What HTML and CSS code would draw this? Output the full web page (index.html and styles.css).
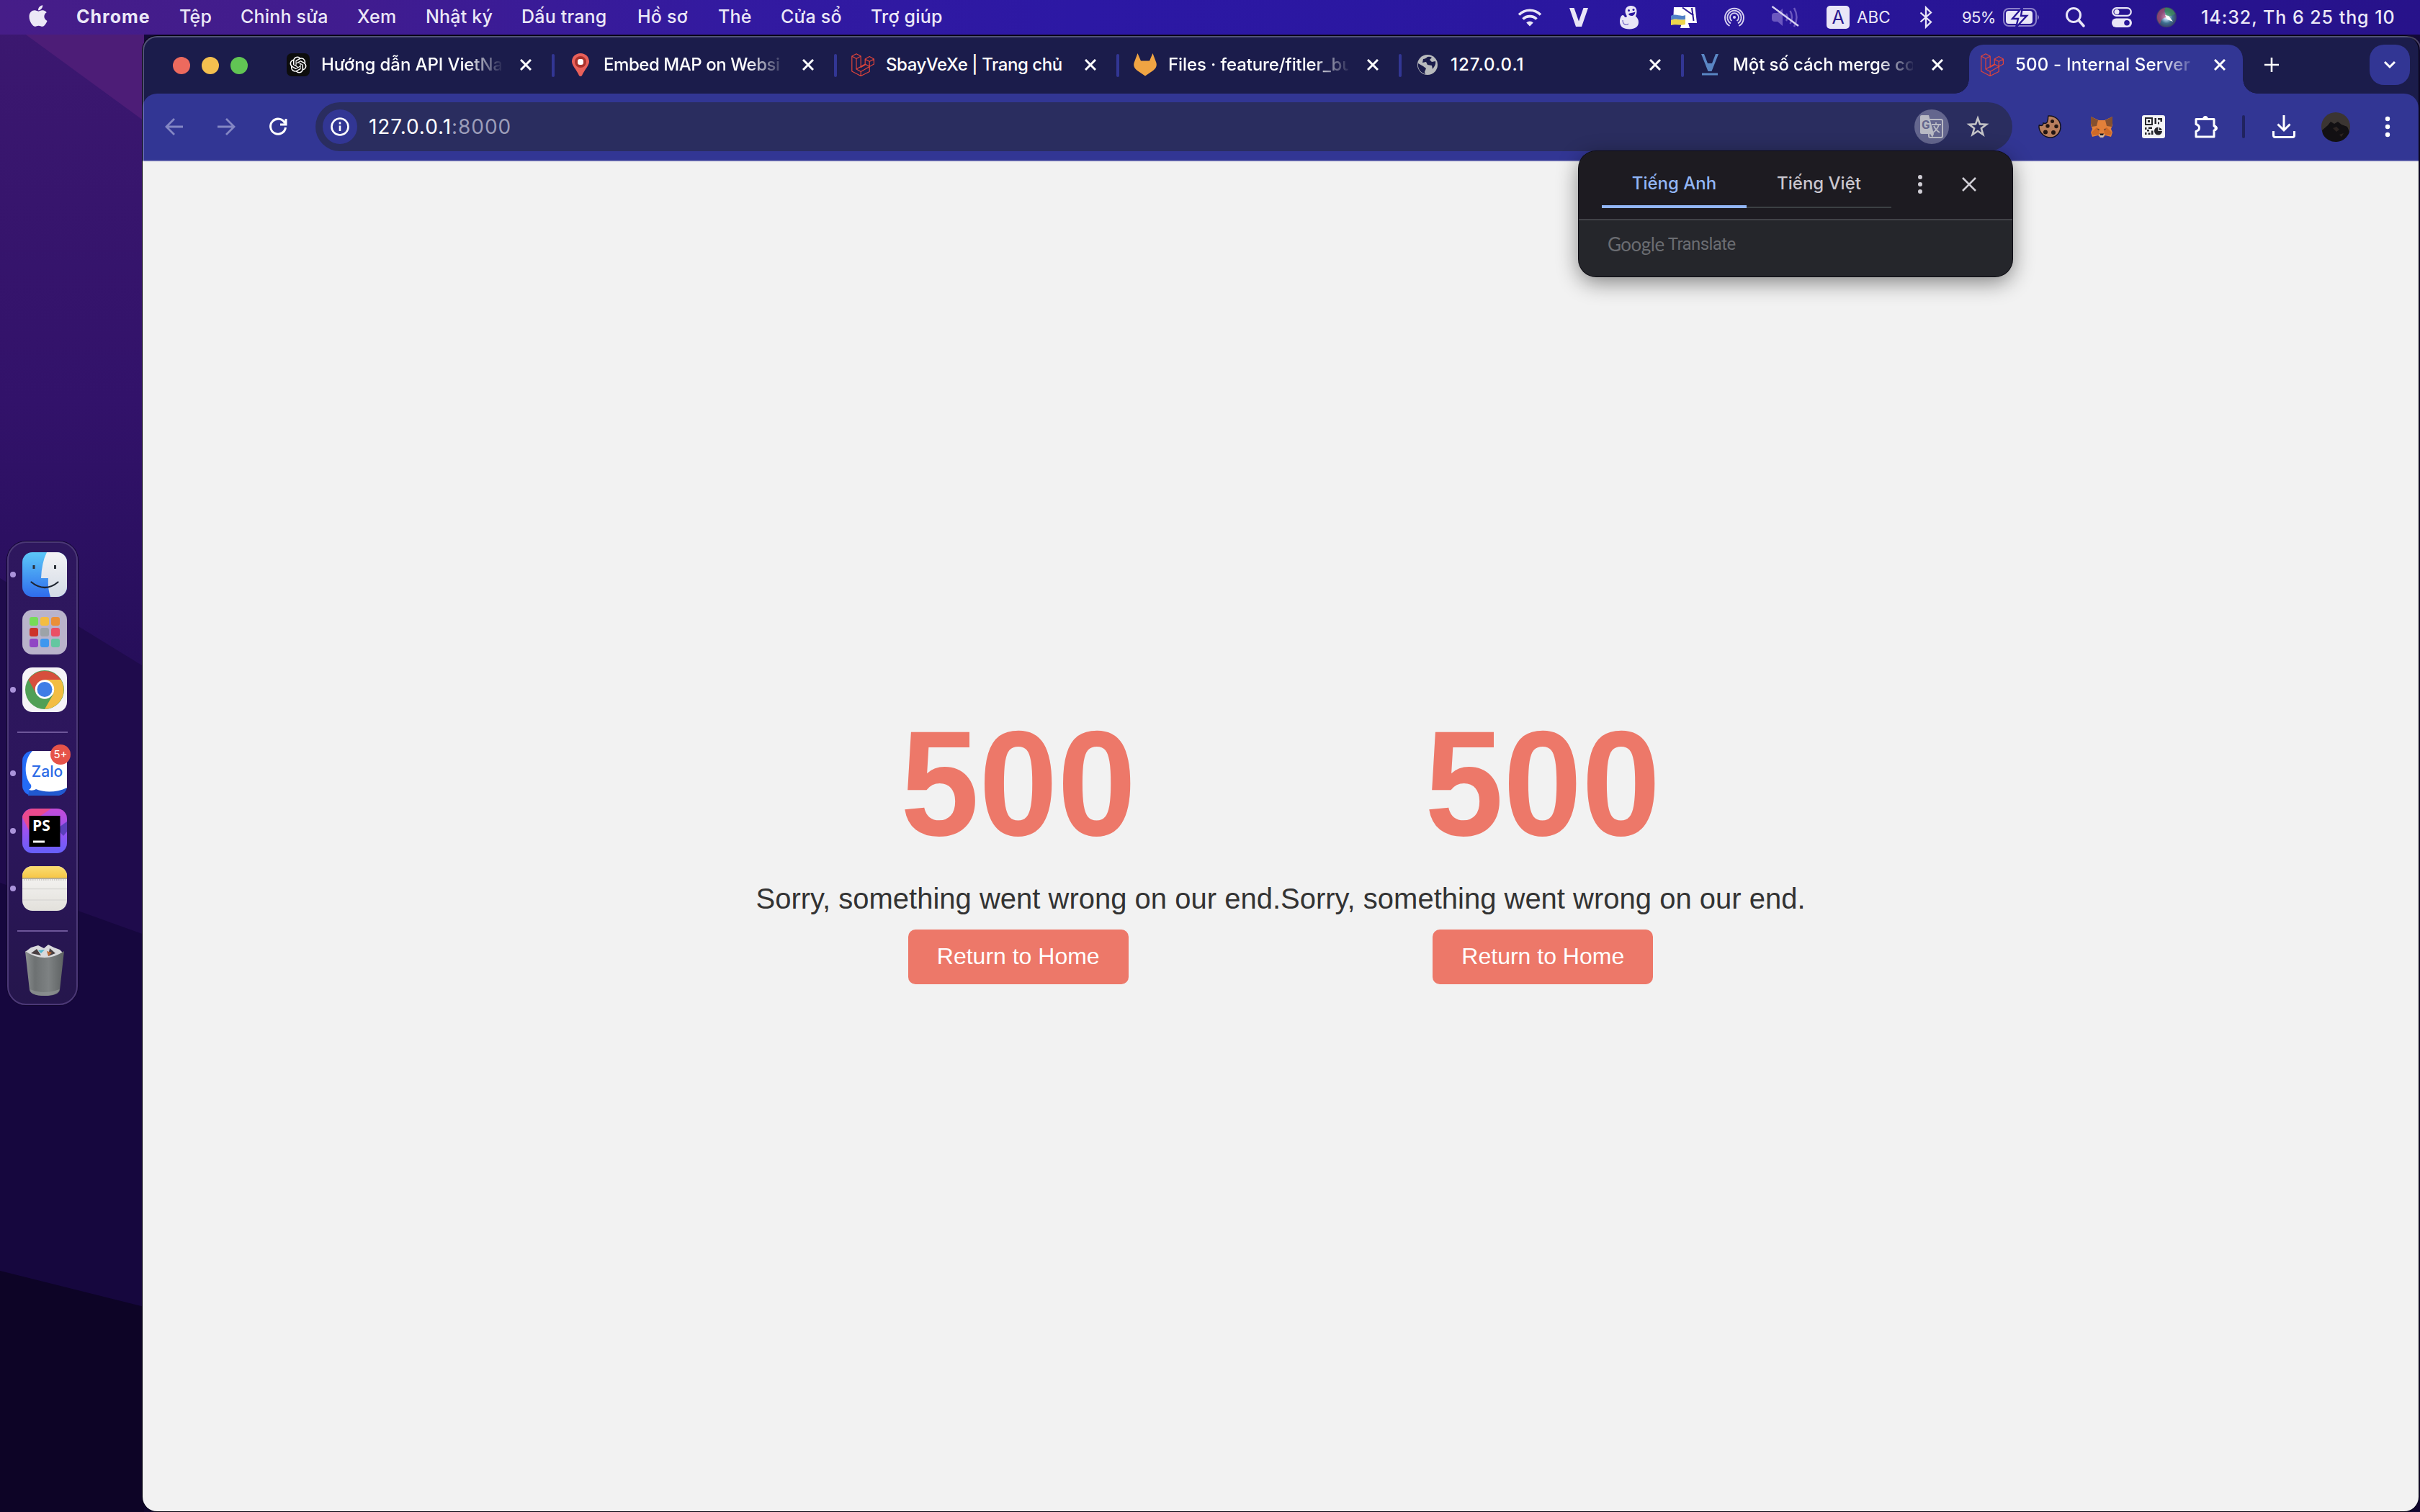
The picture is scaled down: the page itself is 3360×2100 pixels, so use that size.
FILE: index.html
```html
<!DOCTYPE html>
<html lang="vi">
<head>
<meta charset="utf-8">
<title>500 - Internal Server Error</title>
<link rel="stylesheet" href="styles.css">
</head>
<body>
<svg width="0" height="0" class="defs">
  <defs>
    <symbol id="close" viewBox="0 0 16 16"><path d="M1 1l14 14M15 1L1 15" fill="none" stroke="currentColor" stroke-width="3"/></symbol>
    <symbol id="laravel" viewBox="0 0 32 32"><path fill="none" stroke="#e0443a" stroke-width="1.2" stroke-linejoin="round" d="M.8 4L7 .8 13.200 4v15.500l6-3.500V8L25.200 4.500 31.400 8v7l-6.200 3.500v7L13.200 31.500.8 25zM.8 4L7 7.500 13.200 4M7 7.500v14.500l6.200 3.500v6M19.200 8l6 3.500 6.200-3.500M25.200 11.500v7L19.200 15M7 22l6.200-3.500M13.200 25.500l12-7M7 22l12.200-7"/></symbol>
    <linearGradient id="fBlue" x1="0" y1="0" x2="0" y2="1"><stop offset="0" stop-color="#5cc8f8"/><stop offset="1" stop-color="#2f6cec"/></linearGradient>
    <linearGradient id="fWhite" x1="0" y1="0" x2="0" y2="1"><stop offset="0" stop-color="#f4f3f5"/><stop offset="1" stop-color="#d3dbe6"/></linearGradient>
    <linearGradient id="psBg" x1="0" y1="0" x2="0" y2="1"><stop offset="0" stop-color="#c44bd8"/><stop offset=".5" stop-color="#9a52f0"/><stop offset="1" stop-color="#6560fa"/></linearGradient>
    <linearGradient id="noteTop" x1="0" y1="0" x2="0" y2="1"><stop offset="0" stop-color="#fbdd74"/><stop offset="1" stop-color="#f6c544"/></linearGradient>
    <linearGradient id="notePaper" x1="0" y1="0" x2="0" y2="1"><stop offset="0" stop-color="#f8f7f6"/><stop offset="1" stop-color="#e3e1dc"/></linearGradient>
    <linearGradient id="can" x1="0" y1="0" x2="1" y2="0"><stop offset="0" stop-color="#8c9091"/><stop offset=".25" stop-color="#6d7172"/><stop offset=".6" stop-color="#7e8283"/><stop offset="1" stop-color="#5d6162"/></linearGradient>
    <radialGradient id="siri"><stop offset="0" stop-color="#fff"/><stop offset=".25" stop-color="#a9c8e8"/><stop offset=".6" stop-color="#3d6f8e"/><stop offset="1" stop-color="#3a3f68"/></radialGradient>
  </defs>
</svg>

<svg class="wallpaper" viewBox="0 0 200 2100" preserveAspectRatio="none">
  <defs><linearGradient id="wall" x1="0" y1="0" x2="0" y2="1"><stop offset="0" stop-color="#3c1870"/><stop offset=".6" stop-color="#32126a"/><stop offset="1" stop-color="#260e5a"/></linearGradient></defs>
  <rect width="200" height="930" fill="url(#wall)"/>
  <path d="M33 46L200 168V46z" fill="#4d1d77"/>
  <path d="M0 803L200 926V2100H0z" fill="#1f0b4c"/>
  <path d="M0 1226L200 1298V2100H0z" fill="#16073e"/>
  <path d="M0 1765L200 1815V2100H0z" fill="#0d0426"/>
</svg>

<header class="menubar">
  <nav class="menus">
    <svg class="apple" viewBox="0 0 384 512"><path fill="#ece8f6" d="M318.700 268.700c-.2-36.700 16.400-64.400 50-84.800-18.800-26.900-47.200-41.700-84.700-44.600-35.500-2.800-74.300 20.700-88.500 20.700-15 0-49.400-19.700-76.400-19.700C63.300 141.200 4 184.800 4 273.500q0 39.300 14.400 81.200c12.800 36.700 59 126.700 107.200 125.200 25.200-.6 43-17.900 75.800-17.900 31.800 0 48.300 17.900 76.400 17.900 48.600-.7 90.400-82.500 102.600-119.300-65.200-30.700-61.700-90-61.700-91.900zm-56.600-164.200c27.300-32.400 24.800-61.900 24-72.500-24.100 1.400-52 16.400-67.900 34.900-17.500 19.800-27.800 44.300-25.600 71.900 26.100 2 49.900-11.400 69.500-34.300z"/></svg>
    <b>Chrome</b><span>Tệp</span><span>Chỉnh sửa</span><span>Xem</span><span>Nhật ký</span><span>Dấu trang</span><span>Hồ sơ</span><span>Thẻ</span><span>Cửa sổ</span><span>Trợ giúp</span>
  </nav>
  <div class="status">
    <svg width="34" height="26" viewBox="0 0 34 26" fill="none" stroke="#e9e6f7" stroke-width="3.600"><path d="M2 9.500a21 21 0 0 1 30 0M7.500 15.500a13.500 13.500 0 0 1 19 0"/><path d="M17 25.500l-4.800-5a6.600 6.600 0 0 1 9.600 0z" fill="#e9e6f7" stroke="none"/></svg>
    <svg width="26" height="26" viewBox="0 0 26 26"><path fill="#e9e6f7" d="M0 0h6.500L13 18.500 19.500 0H26l-9 26H9z"/></svg>
    <svg width="28" height="34" viewBox="0 0 28 34"><path fill="#e9e6f7" d="M16.500 1c5 0 8 3 8 7.500 0 3-.6 5-1.600 7 3 3 4.100 5 4.100 8.500 0 6-5 9.500-12.500 9.500C6 33.500 1 30 1 23c0-5 2-9 4-9 2.500 0 2 3 4 3 2.500 0 2-2 .5-4-2.500-6 0-12 7-12z"/><circle cx="13.500" cy="7.500" r="1.500" fill="#2a169f"/><circle cx="20" cy="6.500" r="1.500" fill="#2a169f"/><path d="M13 12.500c2-2 5-1 9.500-3-.5 3-2 5.500-5 5.500-2.500 0-4-1-4.500-2.500z" fill="#2a169f"/><path d="M5 21c0 6 5 8 8 5" stroke="#7c70c8" stroke-width="1.300" fill="none"/></svg>
    <svg width="38" height="32" viewBox="0 0 38 32"><path fill="#fff" d="M5 2h29.500l2.500 22H25l2 7H14l2-7H4z"/><path d="M17 2.500l15.500 11M30 3l2.500 18" stroke="#2a1794" stroke-width="2" fill="none"/><path fill="#5080c8" d="M1 14c7-4 13 2 20-1v6c-7 2-13-2-20 1z"/><path fill="#eed64c" d="M1 20c7-3 13 1 20-1v7c-7 2-13-1-20 1z"/></svg>
    <svg width="30" height="30" viewBox="0 0 30 30" fill="none" stroke="#d6d0f0" stroke-width="1.900"><path d="M8.500 27A13 13 0 1 1 21.500 27M10 23.500a9.600 9.600 0 1 1 10 0M11.500 20a6 6 0 1 1 7 0"/><circle cx="15" cy="15" r="2.100" fill="#d6d0f0" stroke="none"/></svg>
    <svg width="40" height="36" viewBox="0 0 40 36" fill="none"><path fill="#6b57bf" d="M1 16q0-4 4-4h4l7-6v24l-7-6H5q-4 0-4-4z"/><path stroke="#6b57bf" stroke-width="2.500" d="M21 13q3 5 0 10M26.500 9q5 9 0 18M32 5q7 13 0 26"/><path d="M1.500 3L38 30" stroke="#d8d3f2" stroke-width="2.400"/></svg>
    <div class="input"><span class="input-key">A</span><span>ABC</span></div>
    <svg width="18" height="32" viewBox="0 0 18 32" fill="none" stroke="#e9e6f7" stroke-width="2.300"><path d="M1.500 9.500L16 22.500 9 29.500V2.500l7 7L1.500 22.500"/></svg>
    <div class="power"><span>95%</span>
      <svg width="52" height="26" viewBox="0 0 52 26"><rect x="1" y="1" width="45" height="24" rx="7" fill="none" stroke="#8b80c9" stroke-width="2"/><path d="M48 9q4 4 0 8z" fill="#8b80c9"/><rect x="4" y="4" width="37" height="18" rx="4" fill="#e9e6f7"/><path d="M27-1L13 15h8l-3 12 15-16h-8z" fill="#e9e6f7" stroke="#281697" stroke-width="2.400"/></svg></div>
    <svg width="28" height="30" viewBox="0 0 28 30" fill="none" stroke="#e9e6f7" stroke-width="3"><circle cx="12" cy="12" r="9.500"/><path d="M19 19l7 8" stroke-width="3.600" stroke-linecap="round"/></svg>
    <svg width="28" height="28" viewBox="0 0 28 28"><rect x="1.200" y="1.200" width="25.600" height="10.600" rx="5.300" fill="none" stroke="#e9e6f7" stroke-width="2.200"/><circle cx="7" cy="6.500" r="3.500" fill="#e9e6f7"/><rect y="15.500" width="28" height="12.500" rx="6.200" fill="#e9e6f7"/><circle cx="21" cy="21.700" r="3.800" fill="#281697"/></svg>
    <svg width="28" height="28" viewBox="0 0 28 28"><circle cx="14" cy="14" r="14" fill="url(#siri)"/><path d="M1 12A13 13 0 0 1 12 1q-2 8 3 13-8 0-10 9a13 13 0 0 1-4-11z" fill="#c03a6c" opacity=".6"/><path d="M12 1a13 13 0 0 1 14 8q-5 4-11 4-4-5-3-12z" fill="#3d8d5a" opacity=".75"/><path d="M12 11l5 1 6 8-8-3z" fill="#fff"/></svg>
    <span class="clock">14:32, Th 6 25 thg 10</span>
  </div>
</header>

<aside class="dock">
  <div class="app running"><svg viewBox="0 0 62 62"><rect width="62" height="62" rx="14" fill="url(#fBlue)"/><path d="M34 0h14a14 14 0 0 1 14 14v34a14 14 0 0 1-14 14H39q-4-12-3-26H26Q27 14 34 0z" fill="url(#fWhite)"/><path d="M16 18v5M45.500 18v5" stroke="#2b3038" stroke-width="3"/><path d="M12.500 41.500q19 15 37 0" fill="none" stroke="#1e2430" stroke-width="2.200" stroke-linecap="round"/></svg></div>
  <div class="app"><svg viewBox="0 0 62 62"><rect width="62" height="62" rx="14" fill="#b9b3cb"/><rect x="10" y="10" width="12" height="12" rx="3" fill="#76dc58"/><rect x="25" y="10" width="12" height="12" rx="3" fill="#f4bd41"/><rect x="40" y="10" width="12" height="12" rx="3" fill="#ea8f37"/><rect x="10" y="25" width="12" height="12" rx="3" fill="#cc3329"/><rect x="25" y="25" width="12" height="12" rx="3" fill="#9da3a8"/><rect x="40" y="25" width="12" height="12" rx="3" fill="#ea5065"/><rect x="10" y="40" width="12" height="12" rx="3" fill="#9046c4"/><rect x="25" y="40" width="12" height="12" rx="3" fill="#3f97ee"/><rect x="40" y="40" width="12" height="12" rx="3" fill="#63c7a0"/></svg></div>
  <div class="app running"><svg viewBox="0 0 62 62"><rect width="62" height="62" rx="14" fill="#f5f3f7"/><circle cx="31" cy="31" r="27" fill="#509f56"/><path d="M8.500 17A27 27 0 0 1 53.500 17H31L19 36z" fill="#d64f3d"/><path d="M53.500 17A27 27 0 0 1 31 58L43 37 31 17z" fill="#f3bd42"/><circle cx="31" cy="30.500" r="13.200" fill="#fff"/><circle cx="31" cy="30.500" r="10.500" fill="#3f7de6"/></svg></div>
  <hr>
  <div class="app running"><svg viewBox="0 0 62 62"><rect width="62" height="62" rx="14" fill="#246bf6"/><path d="M8 62h40a14 14 0 0 0 14-11l-10 4-42-3z" fill="#2159cf"/><path d="M14 0h34a14 14 0 0 1 14 14v37c-14 7-32 7-43 2-3 2-7 2-10 1 3-2 4-4 3-7C2 36 2 12 14 0z" fill="#fff"/><text x="34.500" y="35.500" class="zalo" text-anchor="middle">Zalo</text></svg><span class="badge">5+</span></div>
  <div class="app running"><svg viewBox="0 0 62 62"><rect width="62" height="62" rx="14" fill="url(#psBg)"/><path d="M14 0h26L14 18 9 30 0 12Q2 2 14 0z" fill="#ea4a8e"/><path d="M48 28l14-10v14l-5 6z" fill="#5b3fbb"/><rect x="9.500" y="10" width="43" height="43" fill="#000"/><path d="M15 46h16" stroke="#fff" stroke-width="3"/><text x="14" y="31" class="ps">PS</text></svg></div>
  <div class="app running"><svg viewBox="0 0 62 62"><rect width="62" height="62" rx="14" fill="url(#notePaper)"/><path d="M0 17v-3A14 14 0 0 1 14 0h34a14 14 0 0 1 14 14v3z" fill="url(#noteTop)"/><path d="M0 17h62" stroke="#a59c86" stroke-width="1.400"/><path d="M2 19h58" stroke="#c2c0bc" stroke-width="1.500" stroke-dasharray="1.500 1.500"/><path d="M0 31.500h62M0 47h62" stroke="#d9d8d6" stroke-width="1.500"/></svg></div>
  <hr>
  <div class="app trash"><svg viewBox="0 0 62 72"><path d="M4 10l8-6 10-3 8 4 6-5 8 4 8 3 5 5-8 9H12z" fill="#d9d9dc"/><path d="M12 12l8-6 6 9zM38 5l8 7-10 4z" fill="#494043"/><path d="M22 8l9-1-5 5z" fill="#53b7cf"/><path d="M34 9l7 2-5 5z" fill="#bb6a38"/><path d="M4 9q13 9 27 9t27-9l-6 54q-2 8-21 8t-21-8z" fill="url(#can)"/><path d="M10.500 62q20 8 41 0-1 8-20.500 9-19 0-20.500-9z" fill="#8f9394" opacity=".7"/></svg></div>
</aside>

<main class="window">
  <div class="tabstrip">
    <div class="lights"><i></i><i></i><i></i></div>
    <div class="tab"><svg class="fav" viewBox="0 0 32 32"><rect width="32" height="32" rx="7" fill="#0d0d0d"/><path transform="translate(4.500 4.500) scale(.96)" fill="#fff" d="M22.2819 9.8211a5.9847 5.9847 0 0 0-.5157-4.9108 6.0462 6.0462 0 0 0-6.5098-2.9A6.0651 6.0651 0 0 0 4.9807 4.1818a5.9847 5.9847 0 0 0-3.9977 2.9 6.0462 6.0462 0 0 0 .7427 7.0966 5.98 5.98 0 0 0 .511 4.9107 6.051 6.051 0 0 0 6.5146 2.9001A5.9847 5.9847 0 0 0 13.2599 24a6.0557 6.0557 0 0 0 5.7718-4.2058 5.9894 5.9894 0 0 0 3.9977-2.9001 6.0557 6.0557 0 0 0-.7475-7.0729zm-9.022 12.6081a4.4755 4.4755 0 0 1-2.8764-1.0408l.1419-.0804 4.7783-2.7582a.7948.7948 0 0 0 .3927-.6813v-6.7369l2.02 1.1686a.071.071 0 0 1 .038.052v5.5826a4.504 4.504 0 0 1-4.4945 4.4944zm-9.6607-4.1254a4.4708 4.4708 0 0 1-.5346-3.0137l.142.0852 4.783 2.7582a.7712.7712 0 0 0 .7806 0l5.8428-3.3685v2.3324a.0804.0804 0 0 1-.0332.0615L9.74 19.9502a4.4992 4.4992 0 0 1-6.1408-1.6464zM2.3408 7.8956a4.485 4.485 0 0 1 2.3655-1.9728V11.6a.7664.7664 0 0 0 .3879.6765l5.8144 3.3543-2.0201 1.1685a.0757.0757 0 0 1-.071 0l-4.8303-2.7865A4.504 4.504 0 0 1 2.3408 7.872zm16.5963 3.8558L13.1038 8.364 15.1192 7.2a.0757.0757 0 0 1 .071 0l4.8303 2.7913a4.4944 4.4944 0 0 1-.6765 8.1042v-5.6772a.79.79 0 0 0-.407-.667zm2.0107-3.0231l-.142-.0852-4.7735-2.7818a.7759.7759 0 0 0-.7854 0L9.409 9.2297V6.8974a.0662.0662 0 0 1 .0284-.0615l4.8303-2.7866a4.4992 4.4992 0 0 1 6.6802 4.66zM8.3065 12.863l-2.02-1.1638a.0804.0804 0 0 1-.038-.0567V6.0742a4.4992 4.4992 0 0 1 7.3757-3.4537l-.142.0805L8.704 5.459a.7948.7948 0 0 0-.3927.6813zm1.0976-2.3654l2.602-1.4998 2.6069 1.4998v2.9994l-2.5974 1.4997-2.6067-1.4997Z"/></svg><span class="title fade">Hướng dẫn API VietNa</span><svg class="x"><use href="#close"/></svg></div>
    <div class="tab"><svg class="fav" viewBox="0 0 32 32"><path fill="#e9605a" d="M16 0c7 0 12 5 12 11.500C28 17 22 22 18 31q-2 2-4 0C10 22 4 17 4 11.500 4 5 9 0 16 0z"/><circle cx="16" cy="12" r="8" fill="#a9322c"/><rect x="12" y="8" width="8" height="8" rx="3" fill="#fff"/></svg><span class="title fade tight">Embed MAP on Websi</span><svg class="x"><use href="#close"/></svg></div>
    <div class="tab"><svg class="fav"><use href="#laravel"/></svg><span class="title tight">SbayVeXe | Trang chủ</span><svg class="x"><use href="#close"/></svg></div>
    <div class="tab"><svg class="fav" viewBox="0 0 32 32"><path fill="#f0a443" d="M5.500 0L10 10.500h12L26.500 0 31 12c2 5 0 9-4 12l-11 7.500L5 24c-4-3-6-7-4-12z"/></svg><span class="title fade">Files · feature/fitler_bu</span><svg class="x"><use href="#close"/></svg></div>
    <div class="tab"><svg class="fav" viewBox="0 0 32 32"><circle cx="16" cy="16" r="14" fill="#b8babd"/><path d="M16 5c-2 2-4 3-6 3l-1 5 5-1 2 4 6 1 1 5c2-3 5-6 4-11l-5 1-3-3 3-3q-3-2-6-1zM3 14l7 4 4 3-2 5 1 3C6 27 2 21 3 14z" fill="#1b1c4b"/></svg><span class="title digits">127.0.0.1</span><svg class="x"><use href="#close"/></svg></div>
    <div class="tab"><svg class="fav" viewBox="0 0 32 32"><path fill="#5a86c4" d="M4 1h4l5 13h6l5-13h4L18.500 25h-5zM5 27.500h22v3H5z"/></svg><span class="title fade">Một số cách merge co</span><svg class="x"><use href="#close"/></svg></div>
    <div class="tab active"><svg class="fav"><use href="#laravel"/></svg><span class="title fade loose">500 - Internal Server E</span><svg class="x"><use href="#close"/></svg></div>
    <svg class="plus" viewBox="0 0 20 20"><path d="M10 0v20M0 10h20" stroke="#fff" stroke-width="2.600"/></svg>
    <div class="search-tabs"><svg width="18" height="12" viewBox="0 0 18 12"><path d="M2 2l7 7 7-7" fill="none" stroke="#fff" stroke-width="3"/></svg></div>
  </div>

  <div class="toolbar">
    <div class="nav">
      <svg viewBox="0 0 28 28" class="dim"><path d="M26 14H3M14 3L3 14l11 11"/></svg>
      <svg viewBox="0 0 28 28" class="dim"><path d="M2 14h23M14 3l11 11-11 11"/></svg>
      <svg viewBox="0 0 28 28"><path d="M23.500 9A10.500 10.500 0 1 0 24.500 15M25 3v8h-8" stroke-width="3"/></svg>
    </div>
    <div class="omnibox">
      <div class="info"><svg width="28" height="28" viewBox="0 0 28 28"><circle cx="14" cy="14" r="11.500" fill="none" stroke="#fff" stroke-width="2.600"/><path d="M14 12.500v7.500M14 7.500v3" stroke="#fff" stroke-width="2.600"/></svg></div>
      <span class="url">127.0.0.1<em>:8000</em></span>
      <div class="translate"><svg width="34" height="34" viewBox="0 0 34 34"><rect x="13" y="7" width="19" height="25" rx="2" fill="none" stroke="#b9bac4" stroke-width="2"/><path d="M3 1h10l7 26H3q-2 0-2-2V3q0-2 2-2z" fill="#b9bac4"/><path d="M17 14h13M23 11v3M27 14q-2 7-8 11M20 16q3 6 8 9" stroke="#b9bac4" stroke-width="1.800" fill="none"/><path d="M15 27h5l-2 5z" fill="#b9bac4"/><text x="3" y="20" class="g">G</text></svg></div>
      <svg width="32" height="32" viewBox="0 0 32 32" class="star"><path d="M16 4l3 8.400 9 .4-7.100 5.500 2.500 8.700-7.400-5-7.400 5 2.500-8.700L4 12.800l9-.4z" fill="none" stroke="#c3c3c6" stroke-width="2.600"/></svg>
    </div>
    <div class="exts">
      <svg viewBox="0 0 32 32"><path d="M14 1c9-1 17 6 17 15 0 8-6 15-14 15S2 25 1 17c0-2 0-4 1-3 3 1 5 0 5-3 3 1 6 0 6-4 1-1 0-4 1-6z" fill="#b97f5e" stroke="#15121c" stroke-width="1.500"/><circle cx="19.500" cy="8.500" r="2.500" fill="#221512"/><circle cx="13" cy="15" r="2.700" fill="#221512"/><circle cx="25" cy="15.500" r="2.700" fill="#221512"/><circle cx="10" cy="23.500" r="3" fill="#221512"/><circle cx="21" cy="24" r="3" fill="#221512"/></svg>
      <svg viewBox="0 0 32 32"><path fill="#e2803a" d="M1 2l11 5h8l11-5v12l-2 5 2 5-2 6-8-2-3 3h-4l-3-3-8 2-2-6 2-5-2-5z"/><path fill="#85502f" d="M1 2l10 5-2 8-7 1-1-5zM31 2L21 7l2 8 7 1 1-5z"/><path fill="#cf6a28" d="M9 17l4 2-1 8-8 1-2-4zM23 17l-4 2 1 8 8 1 2-4z"/><path d="M9.500 18.500l3.500 1.500-1 1zM22.500 18.500L19 20l1 1z" fill="#29303f"/><path d="M12 26h8l-2 5h-4z" fill="#d3c3b4"/><path d="M13 25.500h6l-1 2.500h-4z" fill="#1f1b20"/></svg>
      <svg viewBox="0 0 32 32"><rect width="32" height="32" rx="3" fill="#f4f4f6"/><rect x="5" y="4" width="9" height="9" fill="none" stroke="#25252b" stroke-width="2"/><rect x="8" y="7" width="3" height="3" fill="#25252b"/><path d="M17.500 4h2.500v8h-2.500zM22 4h6v5h-2.500V6.500H22zM22 9.500h2v3h-2zM4 17h2.500v3H4zM9 16.500h5v2.500H9zM7 20h3v2.500H7zM4 24h2.500v3H4zM8.500 24.500h3V27h-3zM13 21.500h2.500V27H13z" fill="#25252b"/><circle cx="22.500" cy="22" r="5.500" fill="#25252b"/><path d="M22.500 16h6v6h-6z" fill="#f4f4f6"/><path d="M24 17q3 1 4 4h-4z" fill="#25252b"/></svg>
      <svg viewBox="0 0 36 36" class="puzzle"><path d="M4 7.500h25v9.500a3 3 0 0 1 0 6v9H4v-7.500q4.500-1.500 4.500-5T4 14.500z" fill="none" stroke="#fff" stroke-width="3" stroke-linejoin="round"/><path d="M13 7.500a4 4.500 0 0 1 8 0zM29.500 16a4.500 4 0 0 1 0 8z" fill="#fff"/></svg>
      <i class="divider"></i>
      <svg viewBox="0 0 32 32"><path d="M16 0v20M7.500 12.500L16 21l8.500-8.500M1.500 22v6q0 2.500 2.500 2.500h24q2.500 0 2.500-2.500v-6" fill="none" stroke="#fff" stroke-width="3"/></svg>
      <svg viewBox="0 0 40 40" class="avatar"><circle cx="20" cy="20" r="20" fill="#3b3532"/><path d="M1 25l8-7 4-5 5 3 5-3 5 4 8 3 3 7a20 20 0 0 1-37 3z" fill="#121013"/><path d="M16 22l5-2 4 4-4 3zM25 31l6-2-3 5z" fill="#2c2422"/></svg>
      <svg viewBox="0 0 32 32"><g fill="#fff"><circle cx="16" cy="5" r="3.200"/><circle cx="16" cy="16" r="3.200"/><circle cx="16" cy="27" r="3.200"/></g></svg>
    </div>
  </div>

  <div class="page">
    <section class="error"><h1>500</h1><p>Sorry, something went wrong on our end.</p><a class="home">Return to Home</a></section>
    <section class="error"><h1>500</h1><p>Sorry, something went wrong on our end.</p><a class="home">Return to Home</a></section>
  </div>
</main>

<div class="popup">
  <div class="popup-head">
    <span class="lang on">Tiếng Anh</span><span class="lang">Tiếng Việt</span>
    <svg width="8" height="32" viewBox="0 0 8 32" class="more"><g fill="#cfcdd4"><circle cx="4" cy="6" r="3"/><circle cx="4" cy="16" r="3"/><circle cx="4" cy="26" r="3"/></g></svg>
    <svg width="20" height="20" viewBox="0 0 20 20" class="dismiss"><path d="M1 1l18 18M19 1L1 19" stroke="#cfcdd4" stroke-width="2.600"/></svg>
  </div>
  <div class="popup-body"><span class="google">Google</span><span class="trans">Translate</span></div>
</div>
</body>
</html>
```
FILE: styles.css
```css
* { box-sizing: border-box; }
body {
  margin: 0;
  width: 3360px;
  height: 2100px;
  overflow: hidden;
  position: relative;
  background: #150a3c;
  font-family: Inter, "Noto Sans", sans-serif;
}
svg { display: block; flex: none; overflow: visible; }
.defs { position: absolute; }
.wallpaper { position: absolute; left: 0; top: 0; width: 200px; height: 2100px; }

/* menu bar */
.menubar {
  position: relative;
  z-index: 1;
  display: flex;
  height: 48px;
  color: #ebe8f7;
  font-size: 25px;
  line-height: 46px;
  background: linear-gradient(90deg, #461d88 0, #401c8f 500px, #331aa0 1000px, #2c18a4 1500px, #2a179f 2200px, #271492 2900px, #27128a 3360px);
}
.menus {
  display: grid;
  grid-template-columns: 106px 143px 85px 162px 95px 133px 161px 112px 87px 125px 881px;
  white-space: nowrap;
  font-weight: 450;
  letter-spacing: .2px;
}
.menus b { letter-spacing: 1px; }
.apple { width: 26px; height: 34px; margin: 5px 0 0 40px; }
.status {
  display: grid;
  grid-template-columns: 68px 68px 72px 80px 60px 82px 128px 52px 150px 62px 68px 56px 324px;
  align-items: center;
  justify-items: center;
  white-space: nowrap;
}
.input, .power { justify-self: start; display: flex; align-items: center; font-size: 22px; }
.input { padding-left: 16px; gap: 10px; font-size: 22.5px; }
.input-key {
  width: 32px; height: 32px; border-radius: 5px;
  background: #e9e6f7; color: #29178f;
  text-align: center; line-height: 32px; font-size: 25px;
}
.power { padding-left: 24px; gap: 10px; letter-spacing: -.6px; }
.clock { justify-self: start; padding-left: 20px; letter-spacing: .95px; font-weight: 450; }

/* dock */
.dock {
  position: absolute;
  left: 10px; top: 752px;
  width: 98px; height: 644px;
  padding-top: 13px;
  display: flex; flex-direction: column; align-items: center; gap: 18px;
  border: 2px solid #4b3876;
  border-radius: 26px;
  background: linear-gradient(#2e175e, #2c165c 60%, #25164c);
  box-shadow: 0 0 0 1px #12072f;
}
.dock hr { width: 70px; height: 2px; margin: 9px 0 7px; border: 0; background: #6d5699; }
.dock hr:nth-of-type(2) { margin-bottom: 0; }
.app { position: relative; width: 62px; height: 62px; margin-left: 6px; }
.app svg { width: 62px; height: 62px; }
.running::before {
  content: ""; position: absolute; left: -17px; top: 27px;
  width: 8px; height: 8px; border-radius: 50%; background: #aa93da;
}
.trash svg { height: 72px; width: 62px; }
.badge {
  position: absolute; right: -5px; top: -9px;
  width: 28px; height: 28px; border-radius: 50%;
  background: #e65349; color: #fff; font-size: 15px; line-height: 28px; text-align: center;
}
.zalo { font: 500 21px Inter, sans-serif; fill: #2b6ae6; }
.ps { font: 700 21px "Open Sans", sans-serif; fill: #fff; }

/* browser window */
.window {
  position: absolute;
  left: 198px; top: 50px;
  width: 3160px; height: 2049px;
  border-radius: 20px;
  overflow: hidden;
  background: #1b1c4b;
  box-shadow: 0 0 0 1px #05030f;
}
body::after {
  content: ""; position: absolute; left: 198px; top: 50px;
  width: 3160px; height: 174px;
  border: 2px solid #ffffff3d; border-radius: 20px 20px 0 0; border-bottom: 0;
}
body::before {
  content: ""; position: absolute; left: 198px; top: 70px;
  width: 3160px; height: 2020px;
  border-radius: 20px; box-shadow: 0 10px 70px #000c;
}
.tabstrip { display: flex; align-items: flex-start; height: 80px; }
.lights { display: flex; gap: 16px; padding: 29px 0 0 42px; width: 184px; }
.lights i { width: 24px; height: 24px; border-radius: 50%; background: #ed6a5e; }
.lights i:nth-child(2) { background: #f4bf4f; }
.lights i:nth-child(3) { background: #61c554; }
.tab {
  position: relative;
  display: flex; align-items: center;
  width: 392px; height: 56px; margin-top: 12px;
  padding-left: 16px;
  color: #fff; font-size: 24px; font-weight: 500;
}
.tab:not(.active)::after {
  content: ""; position: absolute; right: 4px; top: 13px;
  width: 4px; height: 32px; border-radius: 2px; background: #323694;
}
.tab:nth-of-type(7)::after { display: none; }
.fav { width: 32px; height: 32px; margin-right: 16px; }
.title { width: 250px; white-space: nowrap; letter-spacing: -.1px; line-height: 40px; }
.title.tight { letter-spacing: -.45px; }
.title.loose { letter-spacing: .2px; }
.title.digits { letter-spacing: 1px; }
.fade { -webkit-mask-image: linear-gradient(90deg, #000 200px, transparent 254px); mask-image: linear-gradient(90deg, #000 200px, transparent 254px); }
.x { width: 16px; height: 16px; margin-left: 26px; color: #fff; }
.active { height: 68px; padding-bottom: 12px; width: 380px; background: #323694; border-radius: 20px 20px 0 0; }
.active::before, .active::after {
  content: ""; position: absolute; bottom: 0; width: 20px; height: 20px;
}
.active::before { left: -20px; background: radial-gradient(circle at 0 0, #0000 19.5px, #323694 20px); }
.active::after { right: -20px; background: radial-gradient(circle at 100% 0, #0000 19.5px, #323694 20px); }
.plus { width: 20px; height: 20px; margin: 30px 0 0 30px; }
.search-tabs {
  display: grid; place-items: center;
  width: 56px; height: 56px; margin: 12px 12px 0 auto;
  border-radius: 20px; background: #323694;
}

.toolbar {
  display: flex; align-items: center;
  height: 94px;
  border-bottom: 2px solid #5c5faa;
  border-radius: 20px 20px 0 0;
  background: #323694;
}
.nav { display: flex; gap: 44px; padding-left: 30px; width: 240px; }
.nav svg { width: 28px; height: 28px; fill: none; stroke: #fff; stroke-width: 2.8; }
.nav .dim { stroke: #8487c4; }
.omnibox {
  display: flex; align-items: center;
  width: 2356px; height: 68px; padding: 0 32px 0 10px;
  border-radius: 34px; background: #2a2d5f;
}
.info, .translate { display: grid; place-items: center; width: 48px; height: 48px; border-radius: 50%; background: #323694; }
.url { margin-left: 16px; color: #fff; font-size: 28px; line-height: 40px; letter-spacing: .95px; }
.url em { font-style: normal; color: #9c9db9; }
.translate { margin-left: auto; background: #64668e; }
.g { font: 700 17px Roboto, sans-serif; fill: #64668e; }
.star { margin-left: 24px; }
.exts { display: flex; align-items: center; gap: 40px; padding-left: 36px; }
.exts > svg { width: 32px; height: 32px; }
.exts > .puzzle { width: 36px; height: 36px; margin-left: -1px; margin-right: -4px; }
.divider { width: 4px; height: 32px; border-radius: 2px; background: #20235f; margin: 0 -2px 0 -4px; }
.exts > .avatar { width: 40px; height: 40px; margin: 0 -4px; }

/* page */
.page {
  display: flex; justify-content: center;
  height: 1875px;
  padding-top: 744px;
  background: #f2f2f2;
  color: #333;
  font-family: "Liberation Sans", Arial, sans-serif;
}
.error { display: flex; flex-direction: column; align-items: center; }
.error h1 { margin: 0; font-size: 200px; line-height: 240px; color: #ed7869; transform: scale(.98, 1.04); }
.error p { margin: 17px 0; font-size: 40px; line-height: 46px; white-space: nowrap; }
.home {
  width: 306px; height: 76px; border-radius: 10px;
  margin-top: 3px;
  background: #ed7869; color: #fff;
  font-size: 32px; line-height: 75px; text-align: center;
}

/* translate popup */
.popup {
  position: absolute; left: 2192px; top: 210px;
  width: 602px; height: 174px;
  border-radius: 24px; overflow: hidden;
  background: #25262b;
  box-shadow: 0 0 0 1px #0c0b12, 0 8px 30px #0007;
}
.popup-head {
  display: flex; align-items: center;
  height: 96px; padding-left: 32px;
  background: #1d1b21;
  border-bottom: 2px solid #414247;
}
.lang {
  width: 201px; height: 64px; line-height: 60px; text-align: center;
  color: #c9c6ce; font-size: 24px; font-weight: 500;
  border-bottom: 2px solid #3c4043;
}
.lang.on { color: #92b6f6; border-bottom: 4px solid #92b6f6; }
.more { margin: 0 54px 2px 36px; }
.dismiss { margin-bottom: 2px; }
.popup-body { display: flex; gap: 5px; padding: 13px 0 0 40px; color: #6b6d72; line-height: 40px; font-size: 25px; }
.google { font-family: Lato, sans-serif; font-size: 26px; letter-spacing: -.5px; }
.trans { font-family: Roboto, sans-serif; font-size: 24px; letter-spacing: -.6px; }
```
